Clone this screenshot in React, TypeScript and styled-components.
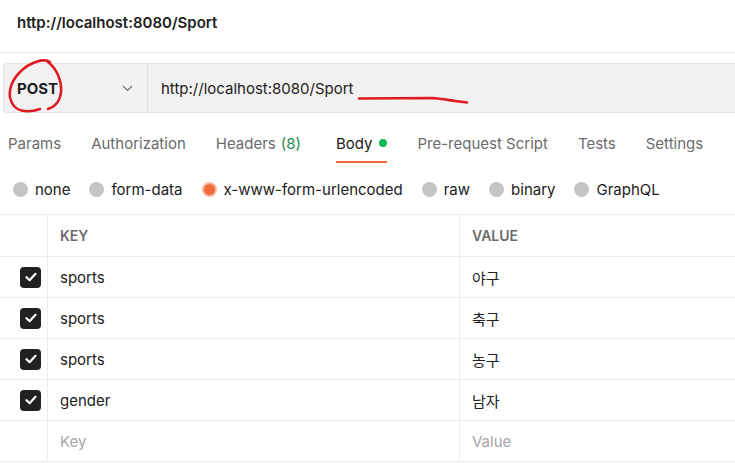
import React from 'react';
import styled, { createGlobalStyle } from 'styled-components';

const GlobalStyle = createGlobalStyle`
  html, body {
    margin: 0;
    padding: 0;
    background: #ffffff;
  }
  body {
    font-family: Inter, "Noto Sans CJK KR", sans-serif;
    color: #212121;
    overflow: hidden;
  }
`;

const tabs = [
  { label: 'Params' },
  { label: 'Authorization' },
  { label: 'Headers', count: '(8)' },
  { label: 'Body', active: true, dot: true },
  { label: 'Pre-request Script' },
  { label: 'Tests' },
  { label: 'Settings' },
];

const bodyTypes = [
  { label: 'none' },
  { label: 'form-data' },
  { label: 'x-www-form-urlencoded', selected: true },
  { label: 'raw' },
  { label: 'binary' },
  { label: 'GraphQL' },
];

const params = [
  { key: 'sports', value: '야구' },
  { key: 'sports', value: '축구' },
  { key: 'sports', value: '농구' },
  { key: 'gender', value: '남자' },
];

const Check = () => (
  <CheckBox>
    <svg width="12" height="10" viewBox="0 0 12 10">
      <path d="M1.5 5.2 L4.6 8.2 L10.5 1.8" fill="none" stroke="#fff" strokeWidth="2.2" strokeLinecap="round" strokeLinejoin="round" />
    </svg>
  </CheckBox>
);

const App = () => {
  return (
    <Page>
      <GlobalStyle />
      <Title>http://localhost:8080/Sport</Title>
      <RequestBar>
        <Method>
          <span>POST</span>
          <svg width="11" height="7" viewBox="0 0 11 7">
            <path d="M1 1 L5.5 5.5 L10 1" fill="none" stroke="#6b6b6b" strokeWidth="1.2" />
          </svg>
        </Method>
        <Url>http://localhost:8080/Sport</Url>
      </RequestBar>

      <Tabs>
        {tabs.map((t) => (
          <Tab key={t.label} $active={t.active}>
            {t.label}
            {t.count && <Count>{t.count}</Count>}
            {t.dot && <Dot />}
          </Tab>
        ))}
      </Tabs>

      <Radios>
        {bodyTypes.map((b) => (
          <RadioItem key={b.label}>
            <Radio $selected={b.selected} />
            {b.label}
          </RadioItem>
        ))}
      </Radios>

      <Table>
        <HeadRow>
          <CheckCell />
          <HeadCell>KEY</HeadCell>
          <HeadCell>VALUE</HeadCell>
        </HeadRow>
        {params.map((p, i) => (
          <Row key={i}>
            <CheckCell>
              <Check />
            </CheckCell>
            <Cell>{p.key}</Cell>
            <Cell>{p.value}</Cell>
          </Row>
        ))}
        <Row>
          <CheckCell />
          <Cell $placeholder>Key</Cell>
          <Cell $placeholder>Value</Cell>
        </Row>
      </Table>

      <Marks width="735" height="463" viewBox="0 0 735 463">
        <path
          d="M50 62 C44 58 30 62 20 72 C10 82 6 96 14 106 C20 113 32 112 40 109 M48 62 C56 68 62 80 61 92 C60 102 54 107 48 109"
          fill="none"
          stroke="#e01a22"
          strokeWidth="2.6"
          strokeLinecap="round"
        />
        <path
          d="M359 98.5 L432 98 C440 98.5 448 100 455 101 L467 102.5"
          fill="none"
          stroke="#e01a22"
          strokeWidth="2.6"
          strokeLinecap="round"
        />
      </Marks>
    </Page>
  );
};

export default App;

const Page = styled.div`
  position: relative;
  width: 735px;
  height: 463px;
  overflow: hidden;
`;

const Title = styled.div`
  height: 53px;
  box-sizing: border-box;
  padding: 14px 17px 0;
  font-size: 15px;
  font-weight: 600;
  line-height: 18px;
  color: #212121;
  border-bottom: 1px solid #ebebeb;
`;

const RequestBar = styled.div`
  display: flex;
  margin: 10px 0 0 3px;
  height: 50px;
  box-sizing: border-box;
  width: 740px;
  background: #f2f2f2;
  border: 1px solid #e3e3e3;
  border-radius: 4px 0 0 4px;
`;

const Method = styled.div`
  width: 144px;
  box-sizing: border-box;
  display: flex;
  align-items: center;
  justify-content: space-between;
  padding: 0 14px 0 13px;
  border-right: 1px solid #e3e3e3;
  font-size: 15px;
  font-weight: 700;
  color: #212121;
`;

const Url = styled.div`
  display: flex;
  align-items: center;
  padding-left: 13px;
  font-size: 15px;
  color: #212121;
`;

const Tabs = styled.div`
  display: flex;
  gap: 30px;
  height: 50px;
  padding-left: 8px;
`;

const Tab = styled.div<{ $active?: boolean }>`
  display: flex;
  align-items: center;
  gap: 5px;
  padding-top: 12px;
  box-sizing: border-box;
  font-size: 15px;
  color: ${(p) => (p.$active ? '#212121' : '#6b6b6b')};
  border-bottom: 2px solid ${(p) => (p.$active ? '#f26b3a' : 'transparent')};
  margin-left: ${(p) => (p.$active ? '5px' : '0')};
`;

const Count = styled.span`
  color: #26894e;
`;

const Dot = styled.span`
  width: 8px;
  height: 8px;
  border-radius: 50%;
  background: #0cbb52;
  margin-left: 2px;
`;

const Radios = styled.div`
  display: flex;
  align-items: center;
  gap: 19px;
  height: 51px;
  box-sizing: border-box;
  padding: 2px 0 0 13px;
`;

const RadioItem = styled.div`
  display: flex;
  align-items: center;
  gap: 7px;
  font-size: 15px;
  color: #212121;
`;

const Radio = styled.span<{ $selected?: boolean }>`
  width: 15px;
  height: 15px;
  box-sizing: border-box;
  border-radius: 50%;
  background: ${(p) => (p.$selected ? '#f26b3a' : '#c4c4c4')};
  border: ${(p) => (p.$selected ? '2px solid #f3b9a1' : 'none')};
`;

const Table = styled.div`
  border-top: 1px solid #ebebeb;
`;

const HeadRow = styled.div`
  display: grid;
  grid-template-columns: 48px 412px 1fr;
  height: 42px;
  box-sizing: border-box;
  border-bottom: 1px solid #ebebeb;
`;

const Row = styled(HeadRow)`
  height: 41px;
`;

const CheckCell = styled.div`
  display: flex;
  align-items: center;
  justify-content: flex-end;
  padding-right: 6px;
  border-right: 1px solid #ebebeb;
`;

const HeadCell = styled.div`
  display: flex;
  align-items: center;
  padding-left: 12px;
  font-size: 14px;
  font-weight: 600;
  color: #6b6b6b;
  border-right: 1px solid #ebebeb;
  &:last-child {
    border-right: none;
  }
`;

const Cell = styled.div<{ $placeholder?: boolean }>`
  display: flex;
  align-items: center;
  padding-left: 12px;
  font-size: 15px;
  color: ${(p) => (p.$placeholder ? '#a6a6a6' : '#212121')};
  border-right: 1px solid #ebebeb;
  &:last-child {
    border-right: none;
  }
`;

const CheckBox = styled.div`
  width: 21px;
  height: 21px;
  border-radius: 4px;
  background: #212121;
  display: flex;
  align-items: center;
  justify-content: center;
`;

const Marks = styled.svg`
  position: absolute;
  top: 0;
  left: 0;
  pointer-events: none;
`;
